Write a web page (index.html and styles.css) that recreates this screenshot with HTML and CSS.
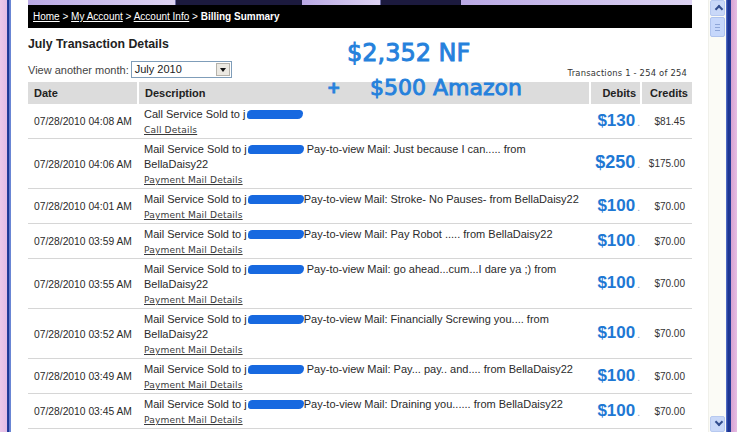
FILE: index.html
```html
<!DOCTYPE html>
<html lang="en">
<head>
  <meta charset="UTF-8" />
  <title>Billing Summary</title>
  <link rel="stylesheet" href="styles.css">
</head>
<body>
  <div class="window">
    <div class="frame-left"></div>

    <div class="page">
      <div class="tabs">
        <span class="tab light" style="width:147px"></span>
        <span class="tab dark" style="width:127px"></span>
        <span class="tab light" style="width:78px"></span>
        <span class="tab dark" style="width:80px"></span>
        <span class="tab light" style="width:232px"></span>
      </div>

      <div class="crumbs">
        <a href="#">Home</a> &gt; <a href="#">My Account</a> &gt; <a href="#">Account Info</a> &gt; <b>Billing Summary</b>
      </div>

      <h2 class="title">July Transaction Details</h2>

      <div class="month-row">
        <label>View another month:</label>
        <div class="select">July 2010<span class="select-btn"><span class="caret"></span></span></div>
        <span class="count">Transactions 1 - 254 of 254</span>
      </div>

      <!-- handwritten totals on top of the page -->
      <div class="note note-total">$2,352 NF</div>
      <div class="note note-plus">+</div>
      <div class="note note-amazon">$500 Amazon</div>

      <table class="tx">
        <colgroup>
          <col style="width:110px">
          <col style="width:452px">
          <col style="width:51px">
          <col style="width:51px">
        </colgroup>
        <thead>
          <tr><th>Date</th><th>Description</th><th class="num">Debits</th><th class="num">Credits</th></tr>
        </thead>
        <tbody>
          <tr>
            <td class="date">07/28/2010 04:08 AM</td>
            <td class="desc">Call Service Sold to j<span class="blot"></span><br><a href="#">Call Details</a></td>
            <td class="debit"><span class="amt">$130</span><span class="dot">.</span></td>
            <td class="credit">$81.45</td>
          </tr>
          <tr>
            <td class="date">07/28/2010 04:06 AM</td>
            <td class="desc">Mail Service Sold to j<span class="blot"></span> Pay-to-view Mail: Just because I can..... from<br>BellaDaisy22<br><a href="#">Payment Mail Details</a></td>
            <td class="debit"><span class="amt big">$250</span><span class="dot">.</span></td>
            <td class="credit">$175.00</td>
          </tr>
          <tr>
            <td class="date">07/28/2010 04:01 AM</td>
            <td class="desc">Mail Service Sold to j<span class="blot"></span>Pay-to-view Mail: Stroke- No Pauses- from BellaDaisy22<br><a href="#">Payment Mail Details</a></td>
            <td class="debit"><span class="amt">$100</span><span class="dot">.</span></td>
            <td class="credit">$70.00</td>
          </tr>
          <tr>
            <td class="date">07/28/2010 03:59 AM</td>
            <td class="desc">Mail Service Sold to j<span class="blot"></span>Pay-to-view Mail: Pay Robot ..... from BellaDaisy22<br><a href="#">Payment Mail Details</a></td>
            <td class="debit"><span class="amt">$100</span><span class="dot">.</span></td>
            <td class="credit">$70.00</td>
          </tr>
          <tr>
            <td class="date">07/28/2010 03:55 AM</td>
            <td class="desc">Mail Service Sold to j<span class="blot"></span> Pay-to-view Mail: go ahead...cum...I dare ya ;) from<br>BellaDaisy22<br><a href="#">Payment Mail Details</a></td>
            <td class="debit"><span class="amt">$100</span><span class="dot">.</span></td>
            <td class="credit">$70.00</td>
          </tr>
          <tr>
            <td class="date">07/28/2010 03:52 AM</td>
            <td class="desc">Mail Service Sold to j<span class="blot"></span>Pay-to-view Mail: Financially Screwing you.... from<br>BellaDaisy22<br><a href="#">Payment Mail Details</a></td>
            <td class="debit"><span class="amt">$100</span><span class="dot">.</span></td>
            <td class="credit">$70.00</td>
          </tr>
          <tr>
            <td class="date">07/28/2010 03:49 AM</td>
            <td class="desc">Mail Service Sold to j<span class="blot"></span> Pay-to-view Mail: Pay... pay.. and.... from BellaDaisy22<br><a href="#">Payment Mail Details</a></td>
            <td class="debit"><span class="amt">$100</span><span class="dot">.</span></td>
            <td class="credit">$70.00</td>
          </tr>
          <tr>
            <td class="date">07/28/2010 03:45 AM</td>
            <td class="desc">Mail Service Sold to j<span class="blot"></span>Pay-to-view Mail: Draining you...... from BellaDaisy22<br><a href="#">Payment Mail Details</a></td>
            <td class="debit"><span class="amt">$100</span><span class="dot">.</span></td>
            <td class="credit">$70.00</td>
          </tr>
        </tbody>
      </table>
    </div>

    <div class="scrollbar">
      <div class="sb-btn up"><span class="chev"></span></div>
      <div class="sb-thumb"><span></span><span></span><span></span></div>
      <div class="sb-track"></div>
      <div class="sb-btn down"><span class="chev"></span></div>
    </div>

    <div class="frame-right"></div>
  </div>
</body>
</html>
```

FILE: styles.css
```css
body {
  margin: 0;
  background: #fff;
  font-family: 'Liberation Sans', Arial, sans-serif;
  color: #222;
}

.window {
  display: flex;
  width: 737px;
  height: 432px;
  overflow: hidden;
}

/* window borders */
.frame-left {
  width: 11px;
  flex-shrink: 0;
  background: linear-gradient(to right, #ecc9ea 0, #e2bce6 7px, #27409f 7px, #1c3390 9px, #5a78cf 9px, #6f8ad6 11px);
}

.frame-right {
  width: 11px;
  flex-shrink: 0;
  background: linear-gradient(to right, #5d7ad2 0, #1b3390 2px, #233c98 5px, #d7a2d2 5px, #e6bde4 11px);
}

.page {
  position: relative;
  width: 697px;
  flex-shrink: 0;
  padding: 0 16px 0 17px;
  box-sizing: border-box;
  overflow: hidden;
}

.tabs {
  display: flex;
  height: 5px;
}

.tab.light { background: linear-gradient(to right, #b9a8e4, #ddd3f2); }
.tab.dark { background: #1c1a3e; border-left: 1px solid #6b6aa0; }

.crumbs {
  height: 23px;
  line-height: 23px;
  background: #000;
  color: #fff;
  font-size: 10px;
  padding-left: 5px;
}

.crumbs a {
  color: #fff;
  text-decoration: underline;
}

.title {
  margin: 8px 0 0 0;
  font-size: 12.3px;
  line-height: 16px;
  font-weight: bold;
  color: #222;
}

.month-row {
  display: flex;
  align-items: center;
  height: 17px;
  margin-top: 9px;
  font-size: 11px;
  color: #444;
}

.month-row label {
  margin-right: 2px;
}

.select {
  position: relative;
  width: 101px;
  height: 17px;
  box-sizing: border-box;
  border: 1px solid #7f9db9;
  padding-left: 3px;
  line-height: 15px;
  font-size: 11px;
  color: #222;
}

.select-btn {
  position: absolute;
  right: 1px;
  top: 1px;
  width: 14px;
  height: 13px;
  background: #ece9e2;
  border: 1px solid #b5b2aa;
  box-sizing: border-box;
}

.caret {
  position: absolute;
  left: 3px;
  top: 4px;
  border-left: 3px solid transparent;
  border-right: 3px solid transparent;
  border-top: 4px solid #111;
}

.count {
  margin-left: auto;
  margin-right: 5px;
  align-self: flex-end;
  font-family: 'DejaVu Sans', sans-serif;
  font-size: 8.4px;
  color: #333;
  letter-spacing: 0.2px;
}

.note {
  position: absolute;
  font-family: 'DejaVu Sans', sans-serif;
  color: #2581dc;
  -webkit-text-stroke: 0.9px #2581dc;
  white-space: nowrap;
  z-index: 2;
}

.note-total {
  left: 336px;
  top: 39px;
  font-size: 24px;
  line-height: 28px;
}

.note-plus {
  left: 316px;
  top: 77px;
  font-size: 16px;
  line-height: 22px;
  font-weight: bold;
}

.note-amazon {
  left: 359px;
  top: 75px;
  font-size: 22px;
  line-height: 26px;
}

.tx {
  width: 664px;
  margin-top: 4px;
  border-collapse: collapse;
  table-layout: fixed;
  font-size: 10.3px;
}

.tx th {
  height: 22px;
  padding: 0 6px;
  background: #dcdcdc;
  text-align: left;
  font-size: 11px;
  color: #222;
  border-left: 2px solid #fff;
}

.tx th:first-child {
  border-left: none;
}

.tx th.num {
  text-align: right;
  padding: 0 4px;
}

.tx td {
  padding: 3px 6px 0 6px;
  border-bottom: 1px solid #d6d6d6;
  vertical-align: middle;
  line-height: 15px;
  color: #2a2a2a;
  white-space: nowrap;
}

.tx td.date {
  padding-bottom: 2px;
}

.tx td.desc {
  font-size: 11px;
}

.tx td.desc a {
  font-family: 'DejaVu Sans', sans-serif;
  font-size: 9.1px;
  color: #3a3a3a;
  letter-spacing: 0.15px;
}

.blot {
  display: inline-block;
  width: 56px;
  height: 9px;
  margin-left: 1px;
  vertical-align: -1px;
  background: #1769e0;
  border-radius: 5px 4px 6px 3px;
}

.tx td.debit {
  text-align: right;
  padding: 0 1px 0 0;
  overflow: visible;
}

.amt {
  font-weight: bold;
  font-size: 17px;
  color: #1e78d4;
}

.amt.big {
  font-size: 18px;
}

.dot {
  font-size: 10px;
  color: #8aa6c8;
  margin-left: 2px;
}

.tx td.credit {
  text-align: right;
  padding: 0 7px 0 0;
  font-size: 10px;
  color: #333;
}

/* scrollbar */
.scrollbar {
  width: 18px;
  flex-shrink: 0;
  display: flex;
  flex-direction: column;
  background: #fbfbf6;
  border-left: 1px solid #f0f0ea;
  box-sizing: border-box;
}

.sb-btn {
  position: relative;
  height: 14px;
  margin: 0 1px;
  background: #c9d8f8;
  border: 1px solid #b7c9f0;
  border-radius: 2px;
}

.sb-btn .chev {
  position: absolute;
  left: 5px;
  width: 4px;
  height: 4px;
  border-left: 2px solid #324d8e;
  border-top: 2px solid #324d8e;
}

.sb-btn.up .chev {
  top: 5px;
  transform: rotate(45deg);
}

.sb-btn.down .chev {
  top: 2px;
  transform: rotate(225deg);
}

.sb-thumb {
  display: flex;
  flex-direction: column;
  justify-content: center;
  gap: 2px;
  height: 18px;
  margin: 1px 1px 0 1px;
  background: #c6d7fb;
  border: 1px solid #afc3ee;
  border-radius: 2px;
}

.sb-thumb span {
  display: block;
  height: 1px;
  margin: 0 4px;
  background: #8ea6d8;
}

.sb-track {
  flex: 1;
}
```
